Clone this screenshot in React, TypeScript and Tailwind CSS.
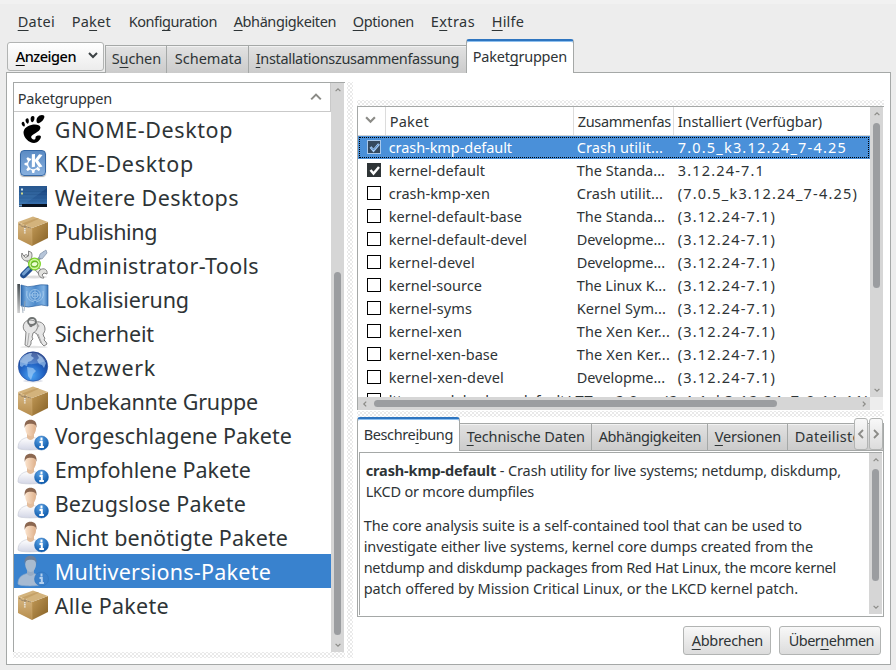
import React, { useLayoutEffect, useRef, useState } from "react";
import { SiGnome, SiKde } from "react-icons/si";

/* Single line label; "&" marks the mnemonic letter. Tracking is computed so the label fills `w` pixels. */
function Label({ text, w, bold = 0, className = "-mt-px mb-px" }: { text: string; w: number; bold?: number; className?: string }) {
  const ref = useRef<HTMLSpanElement>(null);
  const [tracking, setTracking] = useState(0);
  const amp = text.indexOf("&");
  const plain = text.replace("&", "");
  useLayoutEffect(() => {
    if (ref.current) {
      const natural = ref.current.getBoundingClientRect().width;
      setTracking((w + 2 - natural) / plain.length);
    }
  }, [w, plain]);
  return (
    <span ref={ref} className={`inline-block shrink-0 whitespace-pre pl-[0.7px] ${className}`} style={{ letterSpacing: tracking }}>
      {bold > 0 ? (
        <>
          <b>{plain.slice(0, bold)}</b>
          {plain.slice(bold)}
        </>
      ) : amp < 0 ? (
        plain
      ) : (
        <>
          {plain.slice(0, amp)}
          <span className="underline decoration-1 underline-offset-[3px] [text-decoration-skip-ink:none]">{plain[amp]}</span>
          {plain.slice(amp + 1)}
        </>
      )}
    </span>
  );
}

function Chevron({ dir, size = 8, stroke = 2, className = "text-[#8b8b87]" }: { dir: "up" | "down" | "left" | "right"; size?: number; stroke?: number; className?: string }) {
  const d = { up: "M1 7 5 3 9 7", down: "M1 3 5 7 9 3", left: "M7 1 3 5 7 9", right: "M3 1 7 5 3 9" }[dir];
  return (
    <svg width={size} height={size} viewBox="0 0 10 10" className={`shrink-0 ${className}`} fill="none" stroke="currentColor" strokeWidth={stroke}>
      <path d={d} />
    </svg>
  );
}

const hatch =
  "bg-[#e9e9e9] bg-[radial-gradient(circle,#fff_0.8px,transparent_1px),radial-gradient(circle,#fff_0.8px,transparent_1px)] bg-[size:4px_4px] bg-[position:0_0,2px_2px]";

function Box() {
  return (
    <svg width="32" height="32" viewBox="0 0 32 32">
      <defs>
        <linearGradient id="boxR" x1="0" y1="0" x2="1" y2="1">
          <stop offset="0" stopColor="#c29a58" />
          <stop offset="1" stopColor="#856024" />
        </linearGradient>
        <linearGradient id="boxL" x1="0" y1="0" x2="0" y2="1">
          <stop offset="0" stopColor="#d9b985" />
          <stop offset="1" stopColor="#b58c4b" />
        </linearGradient>
      </defs>
      <path d="M1 7 15 13V31L1 24Z" fill="url(#boxL)" />
      <path d="M15 13 31 7V23L15 31Z" fill="url(#boxR)" />
      <path d="M1 7 16 1.500 31 7 15 13Z" fill="#d3b37c" />
      <path d="m5 8.500 15-5.500 2 .8L8 10z" fill="#c5a167" />
      <path d="M2 9 6 12 8 11v4M8 11.500 14 13" stroke="#9c8767" strokeWidth="1.200" fill="none" strokeDasharray="2 .7" />
      <path d="M7.800 13v5.500" stroke="#e9e4da" strokeWidth="1.700" strokeDasharray="1.500 .6" />
      <path d="M15 13V30" stroke="#c9a469" strokeWidth="0.500" fill="none" />
    </svg>
  );
}

function Person({ dim = false }: { dim?: boolean }) {
  return (
    <svg width="32" height="32" viewBox="0 0 32 32">
      <defs>
        <linearGradient id="coat" x1="0" y1="0" x2="0" y2="1">
          <stop offset="0" stopColor="#ffffff" />
          <stop offset="1" stopColor="#d3d6e6" />
        </linearGradient>
        <radialGradient id="info" cx=".4" cy=".25" r=".8">
          <stop offset="0" stopColor="#5ba3e6" />
          <stop offset="1" stopColor="#0753a5" />
        </radialGradient>
        <linearGradient id="face" x1="0" y1="0" x2="1" y2="0">
          <stop offset="0" stopColor="#fbe3cc" />
          <stop offset="1" stopColor="#deb08b" />
        </linearGradient>
      </defs>
      <path d="M1 29C1 23 4 20 10 18.500h7C22 20 25 23 25 29 24 31.500 2 31.500 1 29Z" fill={dim ? "#a6bad2" : "url(#coat)"} stroke={dim ? "#8fa9ca" : "#c4c7d4"} strokeWidth="0.600" />
      <path d="M10 14h7v5q-3.500 4-7 0z" fill={dim ? "#96abc4" : "#e3bd9c"} />
      <ellipse cx="13.600" cy="9.500" rx="5.400" ry="7.400" fill={dim ? "#a9bbcf" : "url(#face)"} />
      <path d="M7.800 9C6.800 3 10 .8 13.500.8S20.500 3 19.400 9C19 6 17.500 4.800 13.600 4.800S8.400 6 7.800 9Z" fill={dim ? "#6d7f98" : "#8b6750"} />
      <circle cx="24.500" cy="24" r="7" fill={dim ? "#397fca" : "url(#info)"} stroke={dim ? "#2d70b9" : "#2a6fb8"} strokeWidth="0.500" />
      <path d="M24.500 18.500v3M22.500 23h2.300v5M22.300 28h4.600" stroke={dim ? "#b4d0ee" : "#fff"} strokeWidth="2" fill="none" />
    </svg>
  );
}

function Kde() {
  return (
    <div className="flex h-[26px] w-[26px] items-center justify-center rounded-[4px] border border-[#3567a4] bg-linear-to-b from-[#5b8bc4] to-[#87afde] text-white shadow-[0_1px_1px_#aaa]">
      <SiKde size={19} />
    </div>
  );
}

function Desktop() {
  return (
    <svg width="30" height="22" viewBox="0 0 30 22">
      <defs>
        <linearGradient id="desk" x1="0" y1="0" x2="0" y2="1">
          <stop offset="0" stopColor="#173f78" />
          <stop offset="1" stopColor="#3a75b4" />
        </linearGradient>
      </defs>
      <rect x="1" width="28" height="21" fill="url(#desk)" />
      <path d="M1 0H29V2L7 18H1Z" fill="#4783bb" opacity=".35" />
      <path d="M1 5.500H29M1 8.500H29M1 12H29M1 15H29" stroke="#123e71" strokeWidth="0.500" opacity=".35" />
      <rect x="1" y="18" width="28" height="3" fill="#08111f" />
      <rect x="1" y="18.500" width="3" height="2" fill="#6c9dd0" />
      <rect x="3" y="2.500" width="2" height="2" fill="#cfe3ee" />
      <rect x="3" y="6.500" width="2" height="2" fill="#cfd78a" />
    </svg>
  );
}

function Tools() {
  return (
    <svg width="32" height="32" viewBox="0 0 32 32">
      <ellipse cx="17" cy="28" rx="13" ry="1.500" fill="#ddd" />
      <path d="M9 8 24 24" stroke="#777" strokeWidth="5" strokeLinecap="round" />
      <path d="M9 8 24 24" stroke="#ededea" strokeWidth="3.600" strokeLinecap="round" />
      <path d="M5 4c-1.500 4 1 8 5 8 4 0 6-4 4.500-8.500L11.500 2v5l-3 1.500L6 6zM23 21c-4 3 0 9 4 8l-2-3 2-2 3 1c1-4-3-7-7-4z" fill="#e1e1de" stroke="#777" strokeWidth="0.900" />
      <path d="M28 3 14 19" stroke="#8996a8" strokeWidth="3" />
      <path d="m29 1-6 4-1 4 3 1 5-6z" fill="#b6c5d9" stroke="#8292a8" strokeWidth="0.700" />
      <path d="M12.500 20 6.500 26" stroke="#224f8f" strokeWidth="6.500" strokeLinecap="round" />
      <path d="M11.500 20 6.500 25" stroke="#729fcf" strokeWidth="3" strokeLinecap="round" />
      <circle cx="17.500" cy="15" r="6.500" fill="#73d216" opacity=".9" />
      <circle cx="17.500" cy="15" r="4.500" fill="none" stroke="#d3f6a7" strokeWidth="1.300" />
      <path d="M14 16c1-4 5-4 7-2-1 5-5 4-7 2z" fill="#eaffd0" stroke="#45930c" strokeWidth="0.700" />
    </svg>
  );
}

function Flag() {
  return (
    <svg width="32" height="32" viewBox="0 0 32 32">
      <defs>
        <linearGradient id="flag" x1="0" y1="0" x2="1" y2="0">
          <stop offset="0" stopColor="#2d6ab0" />
          <stop offset=".2" stopColor="#78acdf" />
          <stop offset=".55" stopColor="#4d8acb" />
          <stop offset=".85" stopColor="#80b2e3" />
          <stop offset="1" stopColor="#3976b9" />
        </linearGradient>
        <linearGradient id="pole" x1="0" y1="0" x2="0" y2="1">
          <stop offset="0" stopColor="#444b4f" />
          <stop offset="1" stopColor="#d0d0d0" />
        </linearGradient>
      </defs>
      <path d="M4 2q7 3 13 1t14-1V23q-7-2-13 0T4 23Z" fill="url(#flag)" stroke="#2b609f" strokeWidth="0.700" />
      <rect x="0.300" y="1" width="2.700" height="29" fill="url(#pole)" />
      <path d="m8 18-1 10M5 22l1 8" stroke="#90a1b1" strokeWidth="0.800" />
      <g fill="none" stroke="#b8d8f4" strokeWidth="0.800" opacity=".8">
        <circle cx="18" cy="12" r="5.500" />
        <circle cx="18" cy="12" r="3" />
        <path d="M18 6.500v11M12.500 12h11M10 8q-2 9 7 11M26 8q2 9-7 11" />
      </g>
    </svg>
  );
}

function Keys() {
  return (
    <svg width="32" height="32" viewBox="0 0 32 32">
      <ellipse cx="17" cy="30" rx="14" ry="1.200" fill="#e5e5e5" />
      <g fill="#e6e6e6" stroke="#858585" strokeWidth="1" strokeLinejoin="round">
        <path d="M17 6C22 3 28 6 28 12c0 2-1 4-2 5l1 3 1 1-1 2 2 2 1 2-3 2-3-3-4-9c-5-2-7-8-3-11Z" />
        <path d="M13 3c6 0 9 4 7 9-1 2-2 3-4 4l-1 4 1 2-2 2v3l-2 3-4-2 1-13C4 12 6 3 13 3Z" />
      </g>
      <path d="m12 16-1.500 12M21 17l4 10" stroke="#aaa" fill="none" />
      <ellipse cx="15" cy="4.500" rx="4" ry="3.500" fill="none" stroke="#6f7372" strokeWidth="1.800" />
      <circle cx="14" cy="8.500" r="1.700" fill="#777" />
      <circle cx="21" cy="9" r="1.400" fill="#aaa" />
    </svg>
  );
}

function Globe() {
  return (
    <svg width="32" height="32" viewBox="0 0 32 32">
      <defs>
        <radialGradient id="globe" cx=".45" cy=".8" r=".8">
          <stop offset="0" stopColor="#4ba4f4" />
          <stop offset=".5" stopColor="#2264c4" />
          <stop offset="1" stopColor="#173580" />
        </radialGradient>
      </defs>
      <ellipse cx="16" cy="30" rx="10" ry="1.500" fill="#dfe2ea" />
      <circle cx="16" cy="15.500" r="14.700" fill="url(#globe)" stroke="#2c4f9c" strokeWidth="0.600" />
      <path d="M3 9C6 4 10 2 15 2l-1 3 3 2-3 3-3 1-1 4-3-1-2 2-2-1zM10 16l6 1 3 3-3 3-2 6-3-4zM20 3l5 3 4 6-2 5-2-3-3-1-2-4 2-2z" fill="#a4cdf5" opacity=".65" />
      <path d="M3 11Q9 1 17 1.500T29 10Q15 16 3 11Z" fill="#fff" opacity=".22" />
    </svg>
  );
}

const groups: { name: string; w: number; icon: React.ReactNode; selected?: boolean }[] = [
  { name: "GNOME-Desktop", w: 177, icon: <SiGnome size={28} color="#000" /> },
  { name: "KDE-Desktop", w: 138, icon: <Kde /> },
  { name: "Weitere Desktops", w: 183, icon: <Desktop /> },
  { name: "Publishing", w: 101, icon: <Box /> },
  { name: "Administrator-Tools", w: 203, icon: <Tools /> },
  { name: "Lokalisierung", w: 133, icon: <Flag /> },
  { name: "Sicherheit", w: 98, icon: <Keys /> },
  { name: "Netzwerk", w: 100, icon: <Globe /> },
  { name: "Unbekannte Gruppe", w: 202, icon: <Box /> },
  { name: "Vorgeschlagene Pakete", w: 236, icon: <Person /> },
  { name: "Empfohlene Pakete", w: 195, icon: <Person /> },
  { name: "Bezugslose Pakete", w: 190, icon: <Person /> },
  { name: "Nicht benötigte Pakete", w: 232, icon: <Person /> },
  { name: "Multiversions-Pakete", w: 215, icon: <Person dim />, selected: true },
  { name: "Alle Pakete", w: 113, icon: <Box /> },
];

type Pkg = [string, number, string, number, string, number];
const packages: Pkg[] = [
  ["crash-kmp-default", 122, "Crash utilit...", 85, "7.0.5_k3.12.24_7-4.25", 168],
  ["kernel-default", 95, "The Standa...", 87, "3.12.24-7.1", 86],
  ["crash-kmp-xen", 100, "Crash utilit...", 85, "(7.0.5_k3.12.24_7-4.25)", 179],
  ["kernel-default-base", 132, "The Standa...", 87, "(3.12.24-7.1)", 97],
  ["kernel-default-devel", 137, "Developme...", 87, "(3.12.24-7.1)", 97],
  ["kernel-devel", 85, "Developme...", 87, "(3.12.24-7.1)", 97],
  ["kernel-source", 92, "The Linux K...", 88, "(3.12.24-7.1)", 97],
  ["kernel-syms", 82, "Kernel Sym...", 88, "(3.12.24-7.1)", 97],
  ["kernel-xen", 72, "The Xen Ker...", 92, "(3.12.24-7.1)", 97],
  ["kernel-xen-base", 108, "The Xen Ker...", 92, "(3.12.24-7.1)", 97],
  ["kernel-xen-devel", 114, "Developme...", 87, "(3.12.24-7.1)", 97],
  ["lttng-modules-kmp-default", 175, "LTTng 2.0 ...", 87, "(2.4.1_k3.12.24_7-0.11.11)", 205],
];

function Check({ index }: { index: number }) {
  const box = index === 0 ? "border-[#a9c9ec] bg-[#34495e]" : index === 1 ? "border-[#2e3436] bg-[#2e3436]" : "border-black bg-white";
  return (
    <span className={`-mt-px mb-px ml-[9px] flex h-[14px] w-[14px] shrink-0 items-center justify-center border ${box}`}>
      {index < 2 && (
        <svg width="12" height="12" viewBox="0 0 12 12" fill="none" className="shrink-0">
          <path d="m2.500 6 3 3.500 5.500-6.500" stroke={index === 0 ? "#a9d0fa" : "#fff"} strokeWidth="2.500" />
          {index === 0 && <path d="m3 6.500 2.500 2.500 5-5.500" stroke="#3b6fa8" strokeWidth="0.800" />}
        </svg>
      )}
    </span>
  );
}

const tab = "flex items-center border-r border-t border-[#a5a8a7] bg-linear-to-b from-[#e2e2e2] to-[#cbcbcb] shadow-[inset_0_1px_#f2f2f2]";
const activeTab = "flex rounded-t-[3px] border-x border-[#a5a8a7] border-t-2 border-t-[#2e75c0] bg-white shadow-[inset_0_1px_#8fc0ef]";
const button = "flex items-center rounded-[3px] border border-[#b2b4b3] bg-linear-to-b from-[#f8f8f8] to-[#dcdcdc]";

export default function App() {
  return (
    <div className="flex h-[670px] w-[896px] flex-col overflow-hidden border-t-4 border-[#f1f1f1] bg-[#ededed] font-['Noto_Sans',sans-serif] text-[14.5px] leading-[20px] text-[#2e3436]">
      <nav className="flex h-[35px] shrink-0 items-center pl-[17px]">
        <Label className="-mt-px mb-px mr-[16px]" text="&Datei" w={36} />
        <Label className="-mt-px mb-px mr-[17px]" text="Pa&ket" w={38} />
        <Label className="-mt-px mb-px mr-[16px]" text="Konfi&guration" w={87} />
        <Label className="-mt-px mb-px mr-[16px]" text="&Abhängigkeiten" w={101} />
        <Label className="-mt-px mb-px mr-[16px]" text="&Optionen" w={60} />
        <Label className="-mt-px mb-px mr-[16px]" text="E&xtras" w={43} />
        <Label text="&Hilfe" w={31} />
      </nav>

      <div className="z-10 flex h-[34px] shrink-0 items-end pl-[7px]">
        <div className="mb-[2px] mr-px flex h-[29px] w-[97px] items-center rounded-[3px] border border-[#b2b4b3] bg-linear-to-b from-white to-[#ececec] pl-[7px] font-medium text-black">
          <Label text="&Anzeigen" w={59} />
          <Chevron dir="down" size={10} className="mb-[3px] ml-[12px] text-[#3c4244]" />
        </div>
        <div className={`${tab} h-[28px] w-[62px] border-l pb-[2px] pl-[5px]`}><Label text="S&uchen" w={48} /></div>
        <div className={`${tab} h-[28px] w-[82px] pb-[2px] pl-[7px]`}><Label text="Schemata" w={66} /></div>
        <div className={`${tab} h-[28px] w-[217px] border-r-0 pb-[2px] pl-[6px]`}><Label text="&Installationszusammenfassung" w={202} /></div>
        <div className={`${activeTab} h-[34px] w-[108px] pl-[5px] pt-[6px]`}><Label text="Paket&gruppen" w={93} /></div>
      </div>

      <main className="-mt-px ml-[6px] flex h-[593px] w-[885px] shrink-0 border border-[#a5a8a7] bg-white pl-[6px] pt-[9px]">
        <section className="flex w-[332px] flex-col">
          <div className="flex h-[570px] border-t border-[#a5a8a7]">
            <div className="w-[318px] border-l border-[#a5a8a7]">
              <div className="flex h-[29px] items-center justify-between border-b border-r border-[#c9c9c9] pl-[3px] pr-[8px]">
                <Label className="mt-px" text="Paketgruppen" w={93} />
                <Chevron dir="up" size={12} stroke={1.700} />
              </div>
              <ul className="text-[21.5px]">
                {groups.map((g) => (
                  <li key={g.name} className={`flex h-[34px] items-center pl-[3px] ${g.selected ? "bg-[#3982ce] text-white" : ""}`}>
                    <span className="mr-[5px] flex h-[32px] w-[32px] shrink-0 items-center justify-center">{g.icon}</span>
                    <Label text={g.name} w={g.w} className="mt-[2px] leading-[30px]" />
                  </li>
                ))}
              </ul>
            </div>
            <div className="flex w-[13px] flex-col items-center bg-[#d6d6d6] py-[4px]">
              <Chevron dir="up" size={6} />
              <div className="mt-[179px] h-[363px] w-[7px] rounded-full bg-[#9b9da0]" />
              <div className="mt-[7px]"><Chevron dir="down" size={6} /></div>
            </div>
          </div>
          <div className={`h-[6px] ${hatch}`} />
        </section>
        <div className={`ml-[2px] h-[576px] w-[6px] shrink-0 ${hatch}`} />

        <section className="ml-[4px] flex w-[527px] shrink-0 flex-col pt-[18px]">
          <div className={`h-[6px] ${hatch}`} />
          <div className="flex h-[291px] border-l border-t border-[#a5a8a7]">
            <div className="h-[290px] w-[512px] overflow-hidden">
              <div className="flex h-[29px] border-b border-[#d2d2d2]">
                <div className="flex w-[28px] items-center justify-center border-r border-[#dcdcdc] pr-[2px] pb-[3px]"><Chevron dir="down" size={11} /></div>
                <div className="flex w-[188px] items-center border-r border-[#dcdcdc] pl-[3px] pt-px"><Label text="Paket" w={38} /></div>
                <div className="flex w-[100px] items-center border-r border-[#dcdcdc] pl-[3px] pt-px"><Label text="Zusammenfas" w={92} /></div>
                <div className="flex items-center pl-[3px] pt-px"><Label text="Installiert (Verfügbar)" w={143} /></div>
              </div>
              {packages.map((p, i) => (
                <div
                  key={p[0]}
                  className={`flex h-[23px] items-center ${i === 0 ? "bg-[#4a90d9] text-white outline-1 -outline-offset-2 outline-dotted outline-black" : ""}`}
                >
                  <Check index={i} />
                  <span className="ml-[7px] flex w-[188px]"><Label text={p[0]} w={p[1]} /></span>
                  <span className="flex w-[101px]"><Label text={p[2]} w={p[3]} /></span>
                  <Label text={p[4]} w={p[5]} />
                </div>
              ))}
            </div>
            <div className="flex w-[13px] flex-col items-center bg-[#d6d6d6] pt-[4px]">
              <Chevron dir="up" size={6} />
              <div className="mt-[6px] h-[165px] w-[7px] rounded-full bg-[#9b9da0]" />
              <div className="mt-[99px]"><Chevron dir="down" size={6} /></div>
            </div>
          </div>
          <div className="flex h-[13px] border-l border-[#a5a8a7]">
            <div className="flex w-[512px] items-center bg-[#d6d6d6] pl-[4px]">
              <Chevron dir="left" size={6} />
              <div className="ml-[6px] h-[7px] w-[403px] rounded-full bg-[#9b9da0]" />
              <Chevron dir="right" size={6} className="ml-[84px] text-[#8b8b87]" />
            </div>
            <div className="w-[13px] bg-[#ededed]" />
          </div>
          <div className={`mt-px h-[6px] ${hatch}`} />

          <div className="relative z-10 flex h-[34px] w-[527px] items-end">
            <div className={`${activeTab} h-[34px] w-[103px] pl-[5px] pt-[6px]`}><Label text="Beschre&ibung" w={88} /></div>
            <div className="flex h-[28px] w-[424px] overflow-hidden border-b border-[#a5a8a7]">
              <div className={`${tab} w-[132px] shrink-0 pl-[6px]`}><Label text="&Technische Daten" w={117} /></div>
              <div className={`${tab} w-[116px] shrink-0 pl-[6px]`}><Label text="Abhängigkeiten" w={101} /></div>
              <div className={`${tab} w-[80px] shrink-0 pl-[6px]`}><Label text="&Versionen" w={65} /></div>
              <div className={`${tab} w-[96px] shrink-0 pl-[6px]`}><Label text="Dateiliste" w={65} /></div>
            </div>
            <div className="absolute right-px top-px flex gap-[1px]">
              <div className={`${button} h-[32px] w-[14px] justify-center`}><Chevron dir="left" size={10} stroke={1.800} /></div>
              <div className={`${button} h-[32px] w-[14px] justify-center`}><Chevron dir="right" size={10} stroke={1.800} /></div>
            </div>
          </div>
          <div className="-mt-px h-[167px] w-[527px] border-x border-b border-[#a5a8a7] pl-px pt-[2px]">
            <div className="flex h-[163px] w-[523px] justify-between border-l border-t border-[#a5a8a7]">
              <div className="flex flex-col items-start pl-[3px] pt-[7px] leading-[21px]">
                <Label className="ml-[2px]" text="crash-kmp-default - Crash utility for live systems; netdump, diskdump," bold={17} w={474} />
                <Label className="ml-[2px]" text="LKCD or mcore dumpfiles" w={167} />
                <Label className="mt-[13px]" text="The core analysis suite is a self-contained tool that can be used to" w={437} />
                <Label className="" text="investigate either live systems, kernel core dumps created from the" w={448} />
                <Label className="" text="netdump and diskdump packages from Red Hat Linux, the mcore kernel" w={471} />
                <Label className="" text="patch offered by Mission Critical Linux, or the LKCD kernel patch." w={433} />
              </div>
              <div className="flex h-[161px] w-[13px] shrink-0 flex-col items-center bg-[#d6d6d6] pt-[4px]">
                <Chevron dir="up" size={6} />
                <div className="mt-[6px] h-[112px] w-[7px] rounded-full bg-[#9b9da0]" />
                <div className="mt-[23px]"><Chevron dir="down" size={6} /></div>
              </div>
            </div>
          </div>
          <div className="mt-[9px] flex justify-end gap-[8px] pr-[3px]">
            <div className={`${button} h-[29px] w-[88px] pl-[7px]`}><Label text="&Abbrechen" w={70} /></div>
            <div className={`${button} h-[29px] w-[102px] pl-[8px]`}><Label text="Über&nehmen" w={84} /></div>
          </div>
        </section>
      </main>
    </div>
  );
}
